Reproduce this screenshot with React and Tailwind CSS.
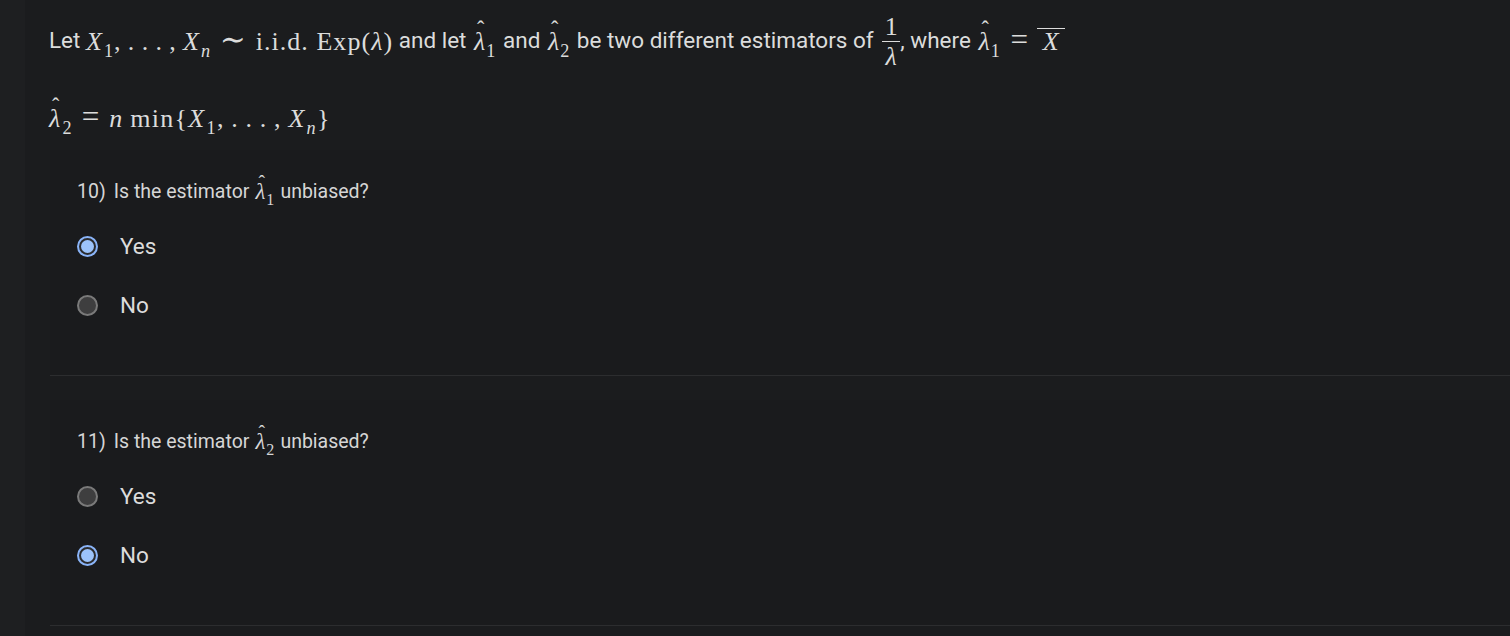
import React from 'react'

const math = { fontFamily: '"Liberation Serif", "DejaVu Serif", serif' }

function Sub({ children, italic }) {
  return (
    <sub className={`text-[0.7em] leading-none align-[-0.16em] ml-[1px] ${italic ? 'italic' : 'not-italic'}`}>{children}</sub>
  )
}

function Hat({ sub, wide }) {
  return (
    <span className={`relative inline-block ${wide ? 'px-[2px]' : ''}`}>
      <span className="italic">λ</span>
      <span className={`absolute top-[-0.4em] not-italic text-[0.85em] ${wide ? 'left-[5px]' : 'left-[3px]'}`}>ˆ</span>
      <Sub>{sub}</Sub>
    </span>
  )
}

function Rel({ children }) {
  return <span className="mx-[0.28em] text-[1.2em] leading-none">{children}</span>
}

function Radio({ checked, label }) {
  return (
    <label className="flex items-center h-[59px] gap-[22px] cursor-pointer">
      {checked ? (
        <span className="w-[21px] h-[21px] rounded-full border-2 border-[#8ab4f8] flex items-center justify-center bg-[#2b2c2e]">
          <span className="w-[13px] h-[13px] rounded-full bg-[#9cc3fa]" />
        </span>
      ) : (
        <span className="w-[21px] h-[21px] rounded-full border-2 border-[#7a7a7a] bg-[#3e3e3f]" />
      )}
      <span className="text-[22.5px] text-[#dcdcdc]">{label}</span>
    </label>
  )
}

function Question({ num, sub, answer }) {
  return (
    <div className="bg-[#1a1b1d] border-b border-[#2c2d2f] pl-[27px] pt-[27px] pb-[40px]">
      <div className="flex items-center text-[19.5px] text-[#d6d6d6] h-[30px] whitespace-nowrap">
        <span className="mr-[8px]">{num})</span>
        <span>Is the estimator</span>
        <span className="mx-[6px] text-[23px]" style={math}><Hat sub={sub} /></span>
        <span>unbiased?</span>
      </div>
      <div className="mt-[10px]">
        <Radio checked={answer === 'Yes'} label="Yes" />
        <Radio checked={answer === 'No'} label="No" />
      </div>
    </div>
  )
}

export default function App() {
  return (
    <div className="flex min-h-screen bg-[#1e1f21]" style={{ fontFamily: 'Roboto, "Noto Sans", sans-serif' }}>
      <div className="w-[25px] shrink-0" />
      <div className="flex-1 bg-[#1b1c1e] pl-[24px] overflow-hidden">
        <div className="text-[22.5px] text-[#dcdcdc] pt-[10px]">
          <div className="flex items-center h-[62px] whitespace-nowrap">
            <span>Let&nbsp;</span>
            <span className="text-[26px] tracking-[0.04em]" style={math}>
              <i>X</i><Sub>1</Sub>,&thinsp;.&thinsp;.&thinsp;.&thinsp;,&thinsp;<i>X</i><Sub italic>n</Sub><Rel>∼</Rel>i.i.d.&nbsp;Exp(<i>λ</i>)
            </span>
            <span>&nbsp;and let&nbsp;</span>
            <span className="text-[26px]" style={math}><Hat sub="1" wide /></span>
            <span>&nbsp;and&nbsp;</span>
            <span className="text-[26px]" style={math}><Hat sub="2" wide /></span>
            <span>&nbsp;be two different estimators of&nbsp;</span>
            <span className="inline-flex flex-col items-center text-[26px] leading-[27px] ml-[3px]" style={math}>
              <span>1</span>
              <span className="w-[18px] border-t border-[#dcdcdc] my-[1px]" />
              <span className="italic">λ</span>
            </span>
            <span>, where&nbsp;</span>
            <span className="text-[26px]" style={math}>
              <Hat sub="1" wide /><Rel>=</Rel><span className="italic inline-block border-t border-[#dcdcdc] leading-[26px] px-[6px]">X</span>
            </span>
          </div>
          <div className="flex items-center h-[72px] mt-[6px] pt-[8px] whitespace-nowrap">
            <span className="text-[26px] tracking-[0.05em]" style={math}>
              <Hat sub="2" /><Rel>=</Rel><i>n</i>&thinsp;min{'{'}<i>X</i><Sub>1</Sub>,&thinsp;.&thinsp;.&thinsp;.&thinsp;,&thinsp;<i>X</i><Sub italic>n</Sub>{'}'}
            </span>
          </div>
        </div>
        <div className="ml-[1px] flex flex-col gap-[24px]">
          <Question num="10" sub="1" answer="Yes" />
          <Question num="11" sub="2" answer="No" />
        </div>
      </div>
    </div>
  )
}
